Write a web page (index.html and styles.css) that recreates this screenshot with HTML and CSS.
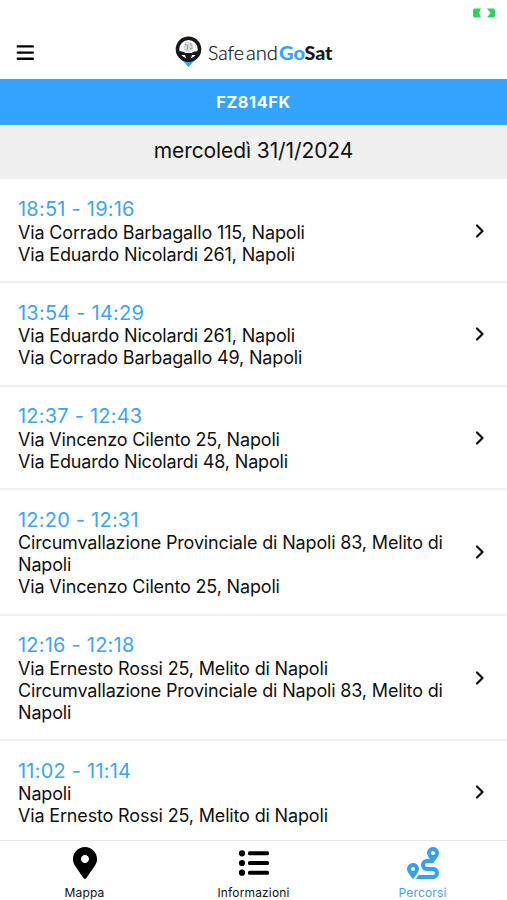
FILE: index.html
```
<!DOCTYPE html>
<html lang="it">
<head>
    <meta charset="UTF-8">
    <meta name="viewport" content="width=device-width, initial-scale=1.0">
    <title>Percorsi</title>
    <link rel="stylesheet" href="styles.css">
</head>
<body>
    <div class="status-bar">
        <svg class="battery" viewBox="0 0 24 10">
            <path d="M3 .5H9L7 5L9 9.500H3Q1 9.500 1 7.500V2.500Q1 .5 3 .5Z"/>
            <path d="M15 .5H21Q23 .5 23 2.500V7.500Q23 9.500 21 9.500H15L18.500 5Z"/>
        </svg>
    </div>
    <header class="header">
        <svg class="menu" viewBox="0 0 18 16">
            <path d="M1.800 1.400H16.800M1.800 7.600H16.800M1.800 13.700H16.800"/>
        </svg>
        <svg class="logo" viewBox="0 0 160 34">
            <path class="logo-tip" d="M7 24H20L13.500 31Z"/>
            <circle class="wheel" cx="13.500" cy="13.200" r="11"/>
            <circle class="globe" cx="13.500" cy="11" r="5.200"/>
            <path class="globe-lines" d="M10 8L13 10L12 14M15 7L17 10M15 13L17 12"/>
            <path class="spokes" d="M3 15.500Q8 14.500 10.500 17H16.500Q19 14.500 24 15.500L22.500 19H17L15.500 24H11.500L10 19H4.500Z"/>
            <text class="logo-light" x="33" y="23.500" textLength="36" lengthAdjust="spacingAndGlyphs">Safe</text>
            <text class="logo-light" x="71" y="23.500" textLength="32" lengthAdjust="spacingAndGlyphs">and</text>
            <text class="logo-bold logo-go" x="104" y="23.500" textLength="26" lengthAdjust="spacingAndGlyphs">Go</text>
            <text class="logo-bold" x="129.500" y="23.500" textLength="28" lengthAdjust="spacingAndGlyphs">Sat</text>
        </svg>
    </header>
    <div class="plate">FZ814FK</div>
    <div class="date">mercoledì 31/1/2024</div>
    <main class="trips">
        <div class="trip">
            <div class="trip-info">
                <div class="time">18:51 - 19:16</div>
                <div>Via Corrado Barbagallo 115, Napoli</div>
                <div>Via Eduardo Nicolardi 261, Napoli</div>
            </div>
            <svg class="arrow" viewBox="0 0 10 14"><path d="M2 1.500L7.500 7L2 12.500"/></svg>
        </div>
        <div class="trip">
            <div class="trip-info">
                <div class="time">13:54 - 14:29</div>
                <div>Via Eduardo Nicolardi 261, Napoli</div>
                <div>Via Corrado Barbagallo 49, Napoli</div>
            </div>
            <svg class="arrow" viewBox="0 0 10 14"><path d="M2 1.500L7.500 7L2 12.500"/></svg>
        </div>
        <div class="trip">
            <div class="trip-info">
                <div class="time">12:37 - 12:43</div>
                <div>Via Vincenzo Cilento 25, Napoli</div>
                <div>Via Eduardo Nicolardi 48, Napoli</div>
            </div>
            <svg class="arrow" viewBox="0 0 10 14"><path d="M2 1.500L7.500 7L2 12.500"/></svg>
        </div>
        <div class="trip">
            <div class="trip-info">
                <div class="time">12:20 - 12:31</div>
                <div>Circumvallazione Provinciale di Napoli 83, Melito di Napoli</div>
                <div>Via Vincenzo Cilento 25, Napoli</div>
            </div>
            <svg class="arrow" viewBox="0 0 10 14"><path d="M2 1.500L7.500 7L2 12.500"/></svg>
        </div>
        <div class="trip">
            <div class="trip-info">
                <div class="time">12:16 - 12:18</div>
                <div>Via Ernesto Rossi 25, Melito di Napoli</div>
                <div>Circumvallazione Provinciale di Napoli 83, Melito di Napoli</div>
            </div>
            <svg class="arrow" viewBox="0 0 10 14"><path d="M2 1.500L7.500 7L2 12.500"/></svg>
        </div>
        <div class="trip">
            <div class="trip-info">
                <div class="time">11:02 - 11:14</div>
                <div>Napoli</div>
                <div>Via Ernesto Rossi 25, Melito di Napoli</div>
            </div>
            <svg class="arrow" viewBox="0 0 10 14"><path d="M2 1.500L7.500 7L2 12.500"/></svg>
        </div>
    </main>
    <nav class="tabs">
        <div class="tab">
            <svg viewBox="0 0 384 512"><path d="M172.268 501.670C26.970 291.031 0 269.413 0 192 0 85.961 85.961 0 192 0s192 85.961 192 192c0 77.413-26.970 99.031-172.268 309.670-9.535 13.774-29.930 13.773-39.464 0zM192 256c35.346 0 64-28.654 64-64s-28.654-64-64-64-64 28.654-64 64 28.654 64 64 64z"/></svg>
            <span>Mappa</span>
        </div>
        <div class="tab">
            <svg viewBox="0 0 32 32">
                <circle cx="4" cy="6.300" r="3.100"/><circle cx="4" cy="16" r="3.100"/><circle cx="4" cy="25.700" r="3.100"/>
                <rect x="10" y="4.300" width="21" height="4" rx="1.500"/><rect x="10" y="14" width="21" height="4" rx="1.500"/><rect x="10" y="23.700" width="21" height="4" rx="1.500"/>
            </svg>
            <span>Informazioni</span>
        </div>
        <div class="tab active">
            <svg viewBox="0 0 512 512"><path d="M416 320h-96c-17.600 0-32-14.400-32-32s14.400-32 32-32h96s96-107 96-160-43-96-96-96-96 43-96 96c0 25.500 22.200 63.400 45.300 96H320c-52.900 0-96 43.100-96 96s43.100 96 96 96h96c17.600 0 32 14.400 32 32s-14.400 32-32 32H185.500c-16 24.800-33.800 47.700-47.300 64H416c52.900 0 96-43.100 96-96s-43.100-96-96-96zm0-256c17.700 0 32 14.300 32 32s-14.300 32-32 32-32-14.300-32-32 14.300-32 32-32zM96 256c-53 0-96 43-96 96s96 160 96 160 96-107 96-160-43-96-96-96zm0 128c-17.700 0-32-14.300-32-32s14.300-32 32-32 32 14.300 32 32-14.300 32-32 32z"/></svg>
            <span>Percorsi</span>
        </div>
    </nav>
</body>
</html>
```
FILE: styles.css
```
* {
    box-sizing: border-box;
}
body {
    font-family: Inter, "Liberation Sans", sans-serif;
    background-color: #fff;
    color: #111;
    margin: 0;
    height: 100vh;
    display: flex;
    flex-direction: column;
    overflow: hidden;
}
.status-bar {
    height: 26px;
    padding: 8px 11px 0 0;
    display: flex;
    justify-content: flex-end;
    flex-shrink: 0;
}
.battery {
    width: 24px;
    height: 10px;
    fill: #30d158;
}
.header {
    height: 53px;
    padding: 0 15px 0 16px;
    display: grid;
    grid-template-columns: 18px 1fr 16px;
    align-items: center;
    justify-items: center;
    flex-shrink: 0;
}
.menu {
    width: 18px;
    height: 16px;
    fill: none;
    stroke: #000;
    stroke-width: 2.4;
    stroke-linecap: round;
}
.logo {
    width: 160px;
    height: 34px;
    font-family: Lato, sans-serif;
    font-size: 19.5px;
    fill: #171717;
}
.logo-light {
    font-weight: 300;
    stroke: #171717;
    stroke-width: 0.25;
}
.logo-bold {
    font-weight: 900;
}
.logo-tip, .logo-go {
    fill: #35a4fc;
}
.wheel {
    fill: #fff;
    stroke: #171717;
    stroke-width: 3.6;
}
.globe {
    fill: #d5dde3;
}
.globe-lines {
    fill: none;
    stroke: #8d99a2;
    stroke-width: 1;
}
.plate {
    height: 46px;
    line-height: 46px;
    background-color: #35a4ff;
    color: #fff;
    font-size: 16.3px;
    font-weight: 700;
    letter-spacing: 0.6px;
    text-align: center;
    flex-shrink: 0;
}
.date {
    height: 54px;
    line-height: 51px;
    background-color: #f0f0f0;
    font-size: 21px;
    letter-spacing: -0.1px;
    text-align: center;
    flex-shrink: 0;
}
.trips {
    flex: 1;
    min-height: 0;
    padding-top: 0.5px;
    overflow: hidden;
}
.trip {
    display: flex;
    align-items: center;
    justify-content: space-between;
    padding: 17.5px 22px 15.5px 18px;
    border-bottom: 2px solid #f0f0f0;
}
.trip-info {
    width: 440px;
    font-size: 18px;
    line-height: 22px;
    letter-spacing: -0.16px;
}
.time {
    color: #3fa4f5;
    font-size: 20px;
    line-height: 24px;
    letter-spacing: 0.22px;
    margin-bottom: 0.5px;
}
.arrow {
    width: 10px;
    height: 14px;
    margin-bottom: 1px;
    fill: none;
    stroke: #111;
    stroke-width: 2.2;
    stroke-linecap: round;
    stroke-linejoin: round;
}
.tabs {
    height: 60px;
    border-top: 1px solid #e8e8e8;
    background-color: #fff;
    display: grid;
    grid-template-columns: repeat(3, 1fr);
    flex-shrink: 0;
}
.tab {
    display: flex;
    flex-direction: column;
    align-items: center;
    padding-top: 6px;
    font-size: 12px;
    line-height: 16px;
    letter-spacing: 0.15px;
    gap: 6px;
}
.tab svg {
    height: 32px;
    fill: #000;
}
.active {
    color: #3fa4f5;
}
.active svg {
    fill: #35a0f5;
}
```
